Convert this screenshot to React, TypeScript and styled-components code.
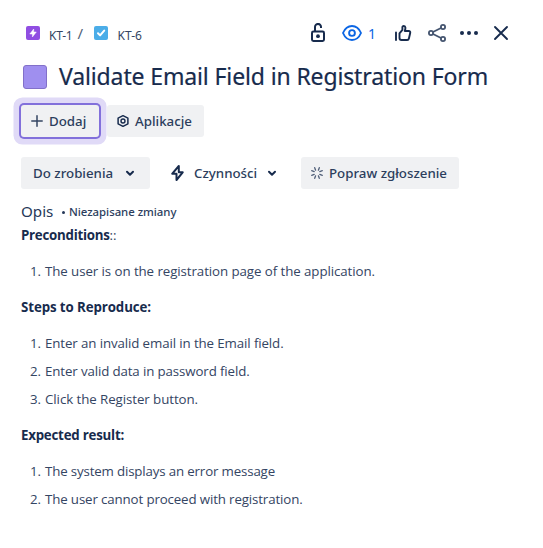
import React from 'react';
import styled, { createGlobalStyle, css } from 'styled-components';

const navy = '#172b4d';

const GlobalStyle = createGlobalStyle`
  * { box-sizing: border-box; }
  body { margin: 0; background: #fff; color: ${navy}; }
  button { font: inherit; color: inherit; border: 0; padding: 0; background: none; }
`;

const Panel = styled.main`
  width: 543px;
  height: 548px;
  padding: 19px 32px 0 21px;
  overflow: hidden;
  background: #fff;
  font-family: 'Noto Sans', 'Open Sans', sans-serif;
`;

const Header = styled.header`
  display: flex;
  justify-content: space-between;
  height: 28px;
`;

const Breadcrumbs = styled.nav`
  display: flex;
  align-items: center;
  padding-left: 5px;
`;

const Crumb = styled.span<{ $spacing: number; $gap: number }>`
  display: flex;
  align-items: center;
  gap: ${(p) => p.$gap}px;
  font-size: 12px;
  line-height: 16px;
  letter-spacing: ${(p) => p.$spacing}px;
  color: #344563;

  svg { margin-bottom: 1px; }
  span { padding-top: 5px; }
`;

const Slash = styled.span`
  width: 21px;
  padding-left: 5px;
  font-size: 15px;
  line-height: 18px;
  color: #505f79;
`;

const Tools = styled.div`
  display: flex;
  align-items: center;
  width: 204px;
  margin-right: -3px;
`;

const Tool = styled.button<{ $width: number; $active?: boolean }>`
  display: flex;
  align-items: center;
  flex: none;
  width: ${(p) => p.$width}px;
  height: 28px;
  color: ${(p) => (p.$active ? '#0c66e4' : navy)};
  font-size: 14px;
  gap: 5px;
`;

const TitleRow = styled.div`
  display: flex;
  align-items: center;
  height: 36px;
  margin-top: 12px;
  padding-left: 2px;
  gap: 12px;
`;

const ColorChip = styled.span`
  width: 24px;
  height: 24px;
  border: 1px solid #8270c9;
  border-radius: 3px;
  background: #9f8fef;
`;

const Title = styled.h1`
  margin: -2px 0 0;
  font-size: 23px;
  font-weight: 400;
  line-height: 28px;
  letter-spacing: -0.129px;
  white-space: nowrap;
  -webkit-text-stroke: 0.2px ${navy};
`;

const ButtonRow = styled.div<{ $top: number; $gap: number }>`
  display: flex;
  height: 32px;
  margin-top: ${(p) => p.$top}px;
  gap: ${(p) => p.$gap}px;
`;

const Button = styled.button<{ $width: number; $pad: number; $gap: number; $plain?: boolean; $focused?: boolean }>`
  display: flex;
  align-items: center;
  flex: none;
  width: ${(p) => p.$width}px;
  height: 32px;
  padding-left: ${(p) => p.$pad}px;
  gap: ${(p) => p.$gap}px;
  border-radius: 3px;
  background: ${(p) => (p.$plain ? 'transparent' : '#f0f1f3')};
  color: #2c3e5d;
  font-size: 13.3px;
  font-weight: 500;
  line-height: 20px;
  white-space: nowrap;
  ${(p) =>
    p.$focused &&
    css`
      box-shadow: 0 0 0 2px #8270db, 0 0 0 7.5px #e0daf7;
    `}
`;

const SectionHead = styled.div`
  display: flex;
  align-items: center;
  height: 20px;
  margin-top: 13px;
`;

const SectionTitle = styled.h2`
  width: 39px;
  margin: -2px 0 0;
  font-size: 15.2px;
  font-weight: 400;
  line-height: 20px;
  color: #253858;
`;

const Unsaved = styled.span`
  display: flex;
  align-items: center;
  gap: 4px;
  padding-left: 2px;
  font-size: 11.4px;
  font-weight: 500;
  line-height: 16px;
  letter-spacing: -0.04px;
  color: #2c3e5d;

  &::before {
    content: '';
    width: 3px;
    height: 3px;
    border-radius: 50%;
    background: #253858;
  }
`;

const Description = styled.section`
  display: flex;
  flex-direction: column;
  gap: 16px;
  margin-top: 3px;
  font-family: 'Open Sans', sans-serif;
  font-size: 13.3px;
  line-height: 20px;
`;

const Heading = styled.p<{ $spacing: number }>`
  margin: 0;
  white-space: nowrap;
  color: #344563;

  strong {
    font-weight: 700;
    letter-spacing: ${(p) => p.$spacing}px;
    color: ${navy};
  }
`;

const Steps = styled.ol`
  display: flex;
  flex-direction: column;
  gap: 8px;
  margin: 0;
  padding: 0 0 0 9px;
  list-style: none;
  counter-reset: step;
`;

const Step = styled.li<{ $spacing: number }>`
  display: flex;
  counter-increment: step;
  letter-spacing: ${(p) => p.$spacing}px;
  white-space: nowrap;
  color: #344563;

  &::before {
    content: counter(step) '.';
    width: 15px;
    flex: none;
  }
`;

const Chevron = () => (
  <svg width="10" height="7" viewBox="0 0 10 7" fill="none" stroke={navy} strokeWidth="2" strokeLinecap="round" strokeLinejoin="round">
    <path d="M2 1.700 5 4.700l3-3" />
  </svg>
);

const sections = [
  {
    title: 'Preconditions', tail: '::', spacing: -0.26,
    steps: [{ text: 'The user is on the registration page of the application.', spacing: -0.075 }],
  },
  {
    title: 'Steps to Reproduce:', tail: '', spacing: -0.097,
    steps: [
      { text: 'Enter an invalid email in the Email field.', spacing: -0.11 },
      { text: 'Enter valid data in password field.', spacing: -0.124 },
      { text: 'Click the Register button.', spacing: -0.07 },
    ],
  },
  {
    title: 'Expected result:', tail: '', spacing: -0.225,
    steps: [
      { text: 'The system displays an error message', spacing: -0.156 },
      { text: 'The user cannot proceed with registration.', spacing: -0.133 },
    ],
  },
];

export default function App() {
  return (
    <Panel>
      <GlobalStyle />
      <Header>
        <Breadcrumbs>
          <Crumb $spacing={-0.21} $gap={9}>
            <svg width="14" height="14" viewBox="0 0 14 14">
              <rect width="14" height="14" rx="2" fill="#904ee2" />
              <path d="M7.700 3v3h2.600L6.400 11V8H3.800Z" fill="#fff" stroke="#fff" strokeWidth=".5" strokeLinejoin="round" />
            </svg>
            <span>KT-1</span>
          </Crumb>
          <Slash>/</Slash>
          <Crumb $spacing={0} $gap={10}>
            <svg width="14" height="14" viewBox="0 0 14 14">
              <rect width="14" height="14" rx="2" fill="#4bade8" />
              <path d="m4 7.300 2.100 2.100L10.200 4.600" fill="none" stroke="#fff" strokeWidth="2" strokeLinecap="round" strokeLinejoin="round" />
            </svg>
            <span>KT-6</span>
          </Crumb>
        </Breadcrumbs>
        <Tools>
          <Tool $width={31} aria-label="Lock">
            <svg width="16" height="20" viewBox="0 0 16 20" fill="none" stroke={navy} strokeWidth="2">
              <rect x="2" y="8.500" width="12" height="9.500" rx="1.400" />
              <path d="M5 8.500V4a3 3 0 0 1 6-.2v1.200" />
              <circle cx="8" cy="13.200" r="1.900" fill={navy} stroke="none" />
            </svg>
          </Tool>
          <Tool $width={53} $active aria-label="Watch">
            <svg width="22" height="18" viewBox="0 0 22 18" fill="none" stroke="#0c66e4" strokeWidth="1.900">
              <path d="M2 9C3.800 4.800 7.100 2 11 2s7.200 2.800 9 7c-1.800 4.200-5.100 7-9 7S3.800 13.200 2 9Z" strokeLinejoin="round" />
              <circle cx="11" cy="9" r="2.900" />
            </svg>
            1
          </Tool>
          <Tool $width={33} aria-label="Like">
            <svg width="18" height="18" viewBox="0 0 18 18" fill="none" stroke={navy} strokeWidth="1.900" strokeLinejoin="round" strokeLinecap="round">
              <path d="M2 8.500V16" />
              <path d="M5.500 14V9.300L8.400 5.800V3.200c0-1.700 2.800-1.700 3 .3.100 1.200-.2 2.400-.7 3.500h4c1.200 0 1.800 1 1.500 2l-1.300 5.500c-.2 1-.8 1.500-1.700 1.500H7.500c-1.200 0-2-.8-2-2Z" />
            </svg>
          </Tool>
          <Tool $width={32} aria-label="Share">
            <svg width="20" height="20" viewBox="0 0 20 20" fill="none" stroke="#44546f" strokeWidth="1.800">
              <circle cx="4" cy="10" r="2.100" />
              <circle cx="16" cy="4" r="2.100" />
              <circle cx="16" cy="16" r="2.100" />
              <path d="m6 9 8-4M6 11l8 4" />
            </svg>
          </Tool>
          <Tool $width={34} aria-label="More">
            <svg width="20" height="6" viewBox="0 0 20 6" fill={navy}>
              <circle cx="3" cy="3" r="2" />
              <circle cx="10" cy="3" r="2" />
              <circle cx="17" cy="3" r="2" />
            </svg>
          </Tool>
          <Tool $width={20} aria-label="Close">
            <svg width="16" height="16" viewBox="0 0 16 16" fill="none" stroke={navy} strokeWidth="1.900" strokeLinecap="round">
              <path d="m2 2 12 12M14 2 2 14" />
            </svg>
          </Tool>
        </Tools>
      </Header>

      <TitleRow>
        <ColorChip />
        <Title>Validate Email Field in Registration Form</Title>
      </TitleRow>

      <ButtonRow $top={10} $gap={8}>
        <Button $width={78} $pad={10} $gap={6} $focused>
          <svg width="12" height="12" viewBox="0 0 12 12" stroke="#344563" strokeWidth="1.500" strokeLinecap="round">
            <path d="M6 .8v10.400M.8 6h10.400" />
          </svg>
          Dodaj
        </Button>
        <Button $width={97} $pad={9} $gap={5}>
          <svg width="14" height="14" viewBox="0 0 14 14" fill="none" stroke={navy} strokeLinejoin="round">
            <path d="M7 1.700 11.900 4.200v5.600L7 12.300 2.100 9.800V4.200Z" strokeWidth="1.500" />
            <circle cx="7" cy="7" r="2" strokeWidth="1.400" />
          </svg>
          Aplikacje
        </Button>
      </ButtonRow>

      <ButtonRow $top={20} $gap={8}>
        <Button $width={129} $pad={12} $gap={12}>
          Do zrobienia
          <Chevron />
        </Button>
        <Button $width={135} $pad={13} $gap={10} $plain>
          <svg width="13" height="18" viewBox="0 0 13 18" fill="none" stroke={navy} strokeWidth="2" strokeLinejoin="round">
            <path d="M7.800 2 1.300 9.700h4.200V16l6.200-7.700H7.800Z" />
          </svg>
          Czynności
          <Chevron />
        </Button>
        <Button $width={158} $pad={9} $gap={5}>
          <svg width="14" height="14" viewBox="0 0 14 14" stroke="#505f79" strokeWidth="1.300" strokeLinecap="round">
            <path d="M5.600 4.200 4.700 1.700M8.400 4.200l.9-2.500M5.600 9.800l-.9 2.500M8.400 9.800l.9 2.500M4.200 5.600 1.700 4.700M4.200 8.400l-2.500.9M9.800 5.600l2.500-.9M9.800 8.400l2.500.9" />
          </svg>
          Popraw zgłoszenie
        </Button>
      </ButtonRow>

      <SectionHead>
        <SectionTitle>Opis</SectionTitle>
        <Unsaved>Niezapisane zmiany</Unsaved>
      </SectionHead>

      <Description>
        {sections.map((section) => (
          <React.Fragment key={section.title}>
            <Heading $spacing={section.spacing}>
              <strong>{section.title}</strong>
              {section.tail}
            </Heading>
            <Steps>
              {section.steps.map((step) => (
                <Step key={step.text} $spacing={step.spacing}>{step.text}</Step>
              ))}
            </Steps>
          </React.Fragment>
        ))}
      </Description>
    </Panel>
  );
}
